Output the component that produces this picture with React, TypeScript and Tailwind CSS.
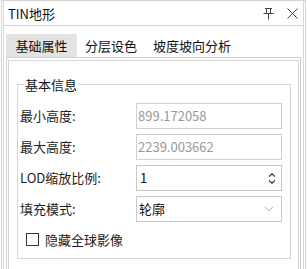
import { ChevronDown, ChevronUp } from "lucide-react";

const font = "font-['Microsoft_YaHei','Noto_Sans_CJK_SC',sans-serif]";

function Field({ label, children }: { label: string; children: React.ReactNode }) {
  return (
    <div className="flex items-center h-[26px]">
      <div className="w-[116px] text-[13px] text-[#222]">{label}</div>
      {children}
    </div>
  );
}

export default function App() {
  return (
    <div className={`w-[307px] h-[269px] overflow-hidden bg-white pl-[1px] ${font}`}>
      {/* window frame */}
      <div className="w-[305px] h-[300px] border-l border-r border-t border-[#d4d4d4] px-[1px]">
        <div className="h-full border-l border-r border-[#d8d8d8]">
          {/* title bar */}
          <div className="h-[25px] flex items-center justify-between border-b border-[#d0d0d0] pl-[4px] pr-[5px]">
            <span className="text-[13px] text-[#111] leading-none">TIN地形</span>
            <div className="flex items-center gap-[13px] pt-[1px]">
              <svg width="11" height="13" viewBox="0 0 11 13" fill="none" stroke="#444" strokeWidth="1">
                <path d="M2 1.5h7M3.5 1.5v5M7.5 1.5v5M0.5 6.5h10M5.5 6.5v6" />
              </svg>
              <svg width="11" height="11" viewBox="0 0 11 11" fill="none" stroke="#444" strokeWidth="1">
                <path d="M0.5 0.5l10 10M10.5 0.5l-10 10" />
              </svg>
            </div>
          </div>

          {/* tabs */}
          <div className="flex pt-[8px] pl-[2px] text-[13px] text-[#111]">
            <div className="h-[23px] w-[71px] bg-[#e3e3e3] flex items-center justify-center">基础属性</div>
            <div className="h-[23px] px-[8px] flex items-center">分层设色</div>
            <div className="h-[23px] px-[8px] flex items-center">坡度坡向分析</div>
          </div>

          {/* panel */}
          <div className="ml-[2px] mr-[2px] h-[240px] border border-[#d0d0d0] px-[1px] pt-[2px]">
            <div className="h-full border-l border-r border-t border-[#d6d6d6] px-[8px] pt-[15px]">
              <fieldset className="border border-[#d6d6d6] pl-[2px] pr-[8px] pb-[12px]">
                <legend className="ml-[4px] px-[1px] text-[13px] text-[#111] leading-[17px]">基本信息</legend>
                <div className="flex flex-col gap-[5px] pt-[10px]">
                  <Field label="最小高度:">
                    <div className="w-[146px] h-[26px] border border-[#cfcfcf] flex items-center pl-[1px] text-[13px] text-[#999]">
                      899.172058
                    </div>
                  </Field>
                  <Field label="最大高度:">
                    <div className="w-[146px] h-[26px] border border-[#cfcfcf] flex items-center pl-[1px] text-[13px] text-[#999]">
                      2239.003662
                    </div>
                  </Field>
                  <Field label="LOD缩放比例:">
                    <div className="w-[146px] h-[26px] border border-[#c8c8c8] flex items-center justify-between pl-[3px] pr-[4px] text-[13px] text-[#111]">
                      <span>1</span>
                      <div className="flex flex-col items-center -space-y-[3px]">
                        <ChevronUp size={10} strokeWidth={3.2} color="#444" />
                        <ChevronDown size={10} strokeWidth={3.2} color="#444" />
                      </div>
                    </div>
                  </Field>
                  <Field label="填充模式:">
                    <div className="w-[146px] h-[26px] border border-[#c8c8c8] flex items-center justify-between pl-[2px] pr-[5px] text-[13px] text-[#111]">
                      <span>轮廓</span>
                      <ChevronDown size={14} strokeWidth={1.3} color="#8a8a8a" />
                    </div>
                  </Field>
                </div>
                <div className="flex items-center mt-[11px] pl-[6px] h-[13px]">
                  <div className="w-[13px] h-[13px] border border-[#333] bg-white" />
                  <span className="ml-[6px] text-[13px] text-[#222]">隐藏全球影像</span>
                </div>
              </fieldset>
            </div>
          </div>
        </div>
      </div>
    </div>
  );
}
